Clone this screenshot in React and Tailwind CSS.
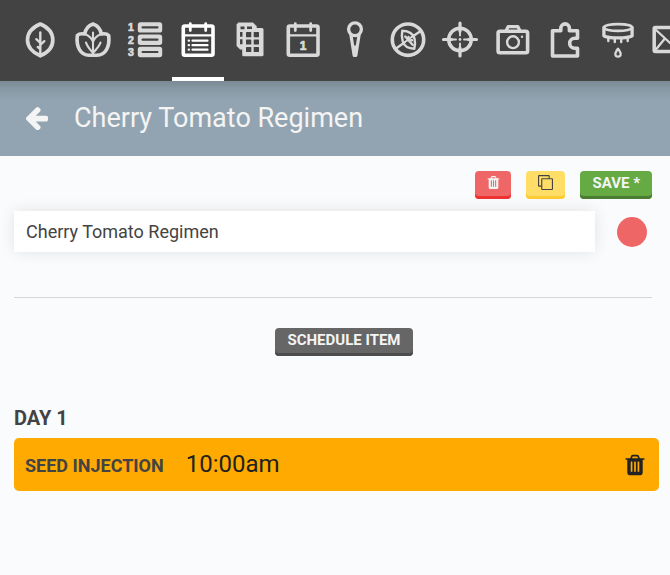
import React, { useState } from "react";

const Calendar = ({ children }) => (
  <>
    <rect x="3.3" y="4" width="29.7" height="29.3" rx="1.5" strokeWidth="3.6" />
    <path d="M3 13.4h30" strokeWidth="2.4" />
    <path d="M10.3 1.6v7M25.7 1.6v7" strokeWidth="2.8" />
    {children}
  </>
);

const navItems = [
  {
    id: "plants",
    label: "Plants",
    icon: (
      <>
        <path d="M18.3 2C26.5 5.5 30.8 11.5 30.8 18c0 6.5-4.5 12.5-12.5 15.8C10.3 30.5 5.5 24.5 5.5 18 5.5 11.5 10 5.5 18.3 2z" strokeWidth="3.7" />
        <path d="M18.3 33V10.5M18.3 23l4-3.8M18.3 20.8l-4-3.6M18.3 27l-2.5-2" strokeWidth="2.4" />
      </>
    )
  },
  {
    id: "groups",
    label: "Groups",
    icon: (
      <>
        <path d="M9.7 12C10.5 7 13.5 3.5 18 2c4.5 1.500 7.500 5 8.300 10 3.500-.7 6 0 7.400 1.400C35 25 30.500 33.300 22 33.300h-8C5.500 33.300 1 25 2.300 13.400 3.700 12 6.200 11.300 9.700 12z" strokeWidth="3.6" />
        <path d="M9.7 12c4 1.500 7 4 8.300 8 1.300-4 4.300-6.500 8.300-8M18 10.500v22.500M11 20.500c.8 3.500 3.200 6 7 10.500M25.500 20.500c-.8 3.500-3.700 6-7.500 10.500" strokeWidth="2.1" />
      </>
    )
  },
  {
    id: "sequences",
    label: "Sequences",
    icon: (
      <>
        {[1.9, 14.2, 26.5].map((y, i) => (
          <g key={y}>
            <rect x="12.5" y={y} width="21" height="7" rx="1" strokeWidth="3.4" fill="currentColor" />
            <rect x="14.5" y={y + 2.4} width="17" height="2.2" rx="1" fill="#434343" stroke="none" />
            <text x="1" y={y + 7.4} fill="currentColor" strokeWidth=".7" fontSize="10.5" fontWeight="700" fontFamily="Liberation Sans, sans-serif">
              {i + 1}
            </text>
          </g>
        ))}
      </>
    )
  },
  {
    id: "regimens",
    label: "Regimens",
    icon: (
      <Calendar>
        <path d="M12.5 18.7h15M12.5 23.2h15M12.5 27.7h15M8.7 18.7h.3M8.7 23.2h.3M8.7 27.7h.3" strokeWidth="2.2" />
      </Calendar>
    )
  },
  {
    id: "farm-designer",
    label: "Saved gardens",
    icon: (
      <>
        <path d="M6.5 .7h14.5l3.5 3.5v2.500H11v20.600H8L4.800 24V2.400z" fill="currentColor" strokeWidth=".4" />
        <rect x="10.2" y="6" width="21.3" height="28.3" rx="1.5" fill="currentColor" stroke="none" />
        <g fill="#434343" stroke="none">
          <path d="M8.5 4.5h4v2.800h-4zM15 4.500h5v2.500H15zM8 10h2.500v4.700H8zM8 17.300h2.500v5H8z" />
          {[10, 17.4, 24.9].map((y) => (
            <g key={y}>
              <rect x="14" y={y} width="5.3" height="5.2" rx=".6" />
              <rect x="21.7" y={y} width="5.3" height="5.2" rx=".6" />
            </g>
          ))}
        </g>
      </>
    )
  },
  {
    id: "events",
    label: "Events",
    icon: (
      <Calendar>
        <text x="18" y="28" textAnchor="middle" fill="currentColor" strokeWidth=".7" fontSize="12" fontWeight="700" fontFamily="Liberation Sans, sans-serif">
          1
        </text>
      </Calendar>
    )
  },
  {
    id: "points",
    label: "Points",
    icon: (
      <>
        <circle cx="18" cy="7.3" r="6.4" strokeWidth="3.3" />
        <path d="M14 13.5l3.2 20h1.600l3.200-20" strokeWidth="3.2" />
        <path d="M16.7 24h2.600l-.6 9h-1.400z" strokeWidth="1" fill="currentColor" />
      </>
    )
  },
  {
    id: "weeds",
    label: "Weeds",
    icon: (
      <>
        <circle cx="18" cy="17.7" r="15.7" strokeWidth="3.6" />
        <path d="M12.3 8.8c7 .2 11 3.2 12.3 8 .7 3.500.4 7-.3 9.900-6 0-10-2.500-11.500-7-1.200-3.700-1.200-7.500-.5-10.900zM30 9.500l-7.500 5M14.500 20.500l-8.500 6M22.500 22.800L15.300 14.500M18.500 18.500v-3.500M18.500 18.500l3.500-.3" strokeWidth="2.4" />
        <path d="M23 14l-8 6" strokeWidth="1.8" />
      </>
    )
  },
  {
    id: "controls",
    label: "Controls",
    icon: (
      <>
        <circle cx="18" cy="17.5" r="11.3" strokeWidth="3.5" />
        <path d="M18 1.2v8M18 26v8M1.500 17.500h8M26.500 17.500h8" strokeWidth="3.2" />
        <path d="M18 9v4.500M18 21.500v4.500M9.500 17.500h4.500M22 17.500h4.500" strokeWidth="1.9" />
        <circle cx="18" cy="17.5" r="1.4" fill="currentColor" stroke="none" />
      </>
    )
  },
  {
    id: "photos",
    label: "Photos",
    icon: (
      <>
        <rect x="3.1" y="9.3" width="29.5" height="21.5" rx="1.8" strokeWidth="3.6" />
        <path d="M11.3 8.5l1.8-3.900h9.800l1.800 3.900" strokeWidth="3.3" />
        <circle cx="18" cy="20.2" r="5.9" strokeWidth="2.4" />
        <circle cx="27" cy="14.7" r="1.2" fill="currentColor" stroke="none" />
      </>
    )
  },
  {
    id: "farmware",
    label: "Farmware",
    icon: (
      <path d="M5.5 34V8.800h8.300V6.200a4.300 4.300 0 0 1 8.600 0v2.600h8.100v7.400h-2.800a5 5 0 0 0 0 10h2.800V34z" strokeWidth="3.6" />
    )
  },
  {
    id: "tools",
    label: "Tools",
    icon: (
      <>
        <ellipse cx="18" cy="5.5" rx="14" ry="3.4" strokeWidth="2.6" />
        <path d="M3.9 5.5v8.300C8 16.500 28 16.500 32.100 13.800V5.500" strokeWidth="3.3" />
        <path d="M8.3 15v4M14.800 16v4M21.200 16v4M27.700 15v4" strokeWidth="2.4" />
        <path d="M18 26.7c1.600 2.200 2.700 3.700 2.700 5.300a2.700 2.700 0 0 1-5.400 0c0-1.600 1.100-3.100 2.700-5.300z" strokeWidth="2.2" />
      </>
    )
  },
  {
    id: "messages",
    label: "Messages",
    icon: (
      <>
        <rect x="2.2" y="5.5" width="31.6" height="24" rx="1" strokeWidth="3.5" />
        <path d="M3.5 7.500L18 21 32.500 7.500M3.500 28l9-11M32.500 28l-9-11" strokeWidth="2.3" />
      </>
    )
  }
];

const TrashIcon = ({ className }) => (
  <svg viewBox="0 0 1792 1792" fill="currentColor" className={className} aria-hidden="true">
    <path d="M704 1376v-704q0-14-9-23t-23-9h-64q-14 0-23 9t-9 23v704q0 14 9 23t23 9h64q14 0 23-9t9-23zm256 0v-704q0-14-9-23t-23-9h-64q-14 0-23 9t-9 23v704q0 14 9 23t23 9h64q14 0 23-9t9-23zm256 0v-704q0-14-9-23t-23-9h-64q-14 0-23 9t-9 23v704q0 14 9 23t23 9h64q14 0 23-9t9-23zm-544-992h448l-48-117q-7-9-17-11h-317q-10 2-17 11zm928 32v64q0 14-9 23t-23 9h-96v948q0 83-47 143.500t-113 60.500h-832q-66 0-113-58.500t-47-141.500v-952h-96q-14 0-23-9t-9-23v-64q0-14 9-23t23-9h309l70-167q15-37 54-63t79-26h320q40 0 79 26t54 63l70 167h309q14 0 23 9t9 23z" />
  </svg>
);

const ArrowLeftIcon = ({ className }) => (
  <svg viewBox="0 -75 1536 1558" fill="currentColor" className={className} aria-hidden="true">
    <path d="M1536 640v128q0 53-32.5 90.500t-84.500 37.500h-704l293 294q38 36 38 90t-38 90l-75 76q-37 37-90 37-52 0-91-37l-651-652q-37-37-37-90 0-52 37-91l651-650q38-38 91-38 52 0 90 38l75 74q38 38 38 91t-38 91l-293 293h704q52 0 84.500 37.500t32.500 90.500z" />
  </svg>
);

const CopyIcon = ({ className }) => (
  <svg viewBox="0 0 16 16" fill="none" stroke="currentColor" strokeWidth="1.2" className={className} aria-hidden="true">
    <path d="M4 11.9H1.100a.5.5 0 0 1-.5-.5V1.100a.5.5 0 0 1 .5-.5h10.300a.5.5 0 0 1 .5.5V4" />
    <rect x="4" y="4" width="11.4" height="11.4" rx=".5" />
  </svg>
);

const NavBar = () => (
  <nav className="overflow-hidden bg-[#434343] pl-3.5">
    <div className="grid w-[735px] grid-cols-14">
      {navItems.map((item) => (
        <a
          key={item.id}
          href={`#${item.id}`}
          aria-label={item.label}
          className={
            item.id === "regimens"
              ? "flex h-[81px] justify-center border-b-4 border-white pt-[22px] text-white"
              : "flex h-[81px] justify-center pt-[22px] text-[#d9d9d9]"
          }
        >
          <svg
            viewBox="0 0 36 36"
            fill="none"
            stroke="currentColor"
            strokeLinecap="round"
            strokeLinejoin="round"
            className="size-9 overflow-visible"
            aria-hidden="true"
          >
            {item.icon}
          </svg>
        </a>
      ))}
    </div>
  </nav>
);

const App = () => {
  const [name, setName] = useState("Cherry Tomato Regimen");

  return (
    <div className="min-h-screen bg-[#fafbfd] font-['Roboto',sans-serif] text-[#434343]">
      <NavBar />

      {/* Panel header */}
      <header className="flex h-[75px] items-center gap-[26px] bg-[#92a4b1] bg-[linear-gradient(rgba(0,0,0,0.16),rgba(0,0,0,0.05)_10px,transparent_20px)] pl-[25px] text-[#f4f4f4]">
        <a href="#regimens" aria-label="Back">
          <ArrowLeftIcon className="w-[23px]" />
        </a>
        <h1 className="pb-0.5 text-[27px] leading-8">Cherry Tomato Regimen</h1>
      </header>

      <main className="pt-[15px] pr-[18px] pb-6 pl-3.5">
        {/* Actions */}
        <div className="flex justify-end gap-[15px]">
          <button aria-label="Delete" className="flex h-7 w-9 justify-center rounded-[4px] bg-[#ee6666] pt-1 text-[#f4f4f4] shadow-[inset_0_-3px_0_#e33]">
            <TrashIcon className="size-[15px]" />
          </button>
          <button aria-label="Copy" className="flex h-7 w-[39px] justify-center rounded-[4px] bg-[#ffdd66] pt-1 text-[#434343] shadow-[inset_0_-3px_0_#fc3]">
            <CopyIcon className="size-[15px]" />
          </button>
          <button className="h-7 rounded-[4px] bg-[#66aa44] px-3 pb-1 text-[15px] leading-6 font-bold text-[#f4f4f4] shadow-[inset_0_-3px_0_#4a7c31]">
            SAVE *
          </button>
        </div>

        {/* Name and color */}
        <div className="mt-3 flex items-center gap-[22px] pr-[5px]">
          <input
            aria-label="Regimen name"
            value={name}
            onChange={(e) => setName(e.target.value)}
            className="h-[41px] min-w-0 flex-1 bg-white px-3 text-lg shadow-[0_0_15px_rgba(0,0,0,0.1)] outline-none"
          />
          <button aria-label="Color" className="size-[30px] rounded-full bg-[#ee6666]" />
        </div>

        <hr className="mt-[45px] border-[#d4d6d8]" />

        <div className="mt-[30px] flex justify-center pl-[22px]">
          <button className="h-7 rounded-[4px] bg-[#666666] px-3 pb-1 text-[15px] leading-6 font-bold text-[#f4f4f4] shadow-[inset_0_-3px_0_#4d4d4d]">
            SCHEDULE ITEM
          </button>
        </div>

        {/* Schedule */}
        <section className="mt-[50px] -mr-[7px]">
          <h2 className="text-xl leading-6 font-bold">DAY 1</h2>
          <div className="mt-2 flex h-[53px] items-center rounded-[5px] bg-[#ffaa00] pr-3 pl-[11px]">
            <div className="flex flex-1 items-baseline gap-[22px] pb-0.5">
              <span className="text-lg font-bold">SEED INJECTION</span>
              <time className="text-2xl text-[#222222]">10:00am</time>
            </div>
            <button aria-label="Remove item" className="text-[#222222]">
              <TrashIcon className="size-6" />
            </button>
          </div>
        </section>
      </main>
    </div>
  );
};

export default App;
